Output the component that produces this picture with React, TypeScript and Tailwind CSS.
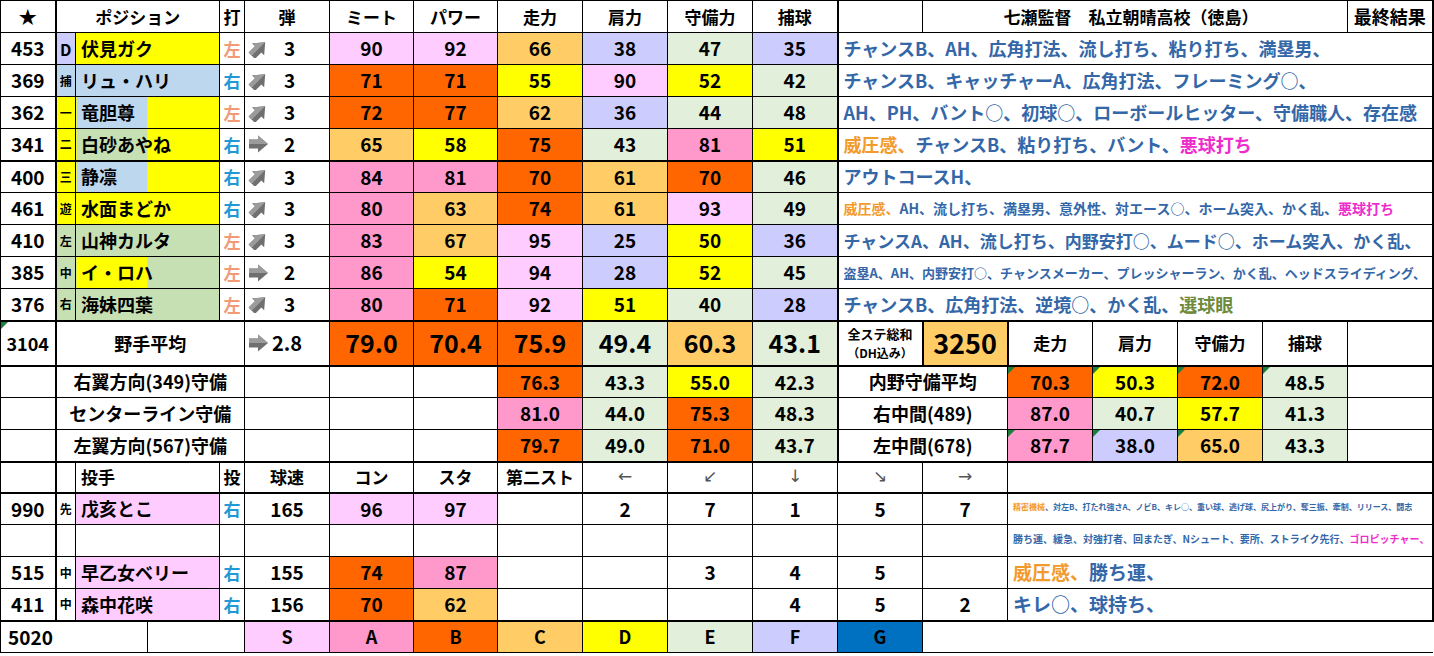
import React from 'react';

type Seg = [string, string];

const BLUE = 'text-[#3467a8]';
const ORANGE = 'text-[#f39a2c]';
const PINK = 'text-[#ee2ccc]';
const OLIVE = 'text-[#6f8a3c]';

const gradeBg: Record<string, string> = {
  S: 'bg-[#ffccff]',
  A: 'bg-[#ff99cc]',
  B: 'bg-[#ff6600]',
  C: 'bg-[#ffcc66]',
  D: 'bg-[#ffff00]',
  E: 'bg-[#e2efda]',
  F: 'bg-[#ccccff]',
  G: 'bg-[#0070c0]',
};

const rank = (v: number) =>
  v >= 90 ? 'S' : v >= 80 ? 'A' : v >= 70 ? 'B' : v >= 60 ? 'C' : v >= 50 ? 'D' : v >= 40 ? 'E' : v >= 20 ? 'F' : 'G';

const fill = {
  Y: 'bg-[#ffff00]',
  BL: 'bg-[#bdd7ee]',
  GR: 'bg-[#c6e0b4]',
  LV: 'bg-[#ccccff]',
  BY: 'bg-[linear-gradient(to_right,#bdd7ee_50%,#ffff00_50%)]',
  GY: 'bg-[linear-gradient(to_right,#c6e0b4_50%,#ffff00_50%)]',
  YG: 'bg-[linear-gradient(to_right,#ffff00_50%,#c6e0b4_50%)]',
  P: 'bg-[#ffccff]',
};

const LEFT = 'text-[#f29a78]';
const RIGHT = 'text-[#1f9ad6]';

const batters = [
  { no: 453, pos: 'D', posBg: fill.LV, name: '伏見ガク', nameBg: fill.Y, hand: '左', dan: 3, stats: [90, 92, 66, 38, 47, 35], size: 'text-[18px]',
    abil: [['チャンスB、AH、広角打法、流し打ち、粘り打ち、満塁男、', BLUE]] as Seg[] },
  { no: 369, pos: '捕', posBg: fill.BL, name: 'リュ・ハリ', nameBg: fill.BL, hand: '右', dan: 3, stats: [71, 71, 55, 90, 52, 42], size: 'text-[18px]',
    abil: [['チャンスB、キャッチャーA、広角打法、フレーミング○、', BLUE]] as Seg[] },
  { no: 362, pos: '一', posBg: fill.Y, name: '竜胆尊', nameBg: fill.BY, hand: '左', dan: 3, stats: [72, 77, 62, 36, 44, 48], size: 'text-[18px]',
    abil: [['AH、PH、バント○、初球○、ローボールヒッター、守備職人、存在感', BLUE]] as Seg[] },
  { no: 341, pos: '二', posBg: fill.Y, name: '白砂あやね', nameBg: fill.GY, hand: '右', dan: 2, stats: [65, 58, 75, 43, 81, 51], size: 'text-[18px]',
    abil: [['威圧感、', ORANGE], ['チャンスB、粘り打ち、バント、', BLUE], ['悪球打ち', PINK]] as Seg[] },
  { no: 400, pos: '三', posBg: fill.Y, name: '静凛', nameBg: fill.BY, hand: '右', dan: 3, stats: [84, 81, 70, 61, 70, 46], size: 'text-[18px]',
    abil: [['アウトコースH、', BLUE]] as Seg[] },
  { no: 461, pos: '遊', posBg: fill.Y, name: '水面まどか', nameBg: fill.Y, hand: '右', dan: 3, stats: [80, 63, 74, 61, 93, 49], size: 'text-[14px]',
    abil: [['威圧感、', ORANGE], ['AH、流し打ち、満塁男、意外性、対エース○、ホーム突入、かく乱、', BLUE], ['悪球打ち', PINK]] as Seg[] },
  { no: 410, pos: '左', posBg: fill.GR, name: '山神カルタ', nameBg: fill.GR, hand: '左', dan: 3, stats: [83, 67, 95, 25, 50, 36], size: 'text-[17px]',
    abil: [['チャンスA、AH、流し打ち、内野安打○、ムード○、ホーム突入、かく乱、', BLUE]] as Seg[] },
  { no: 385, pos: '中', posBg: fill.GR, name: 'イ・ロハ', nameBg: fill.YG, hand: '左', dan: 2, stats: [86, 54, 94, 28, 52, 45], size: 'text-[13px]',
    abil: [['盗塁A、AH、内野安打○、チャンスメーカー、プレッシャーラン、かく乱、ヘッドスライディング、', BLUE]] as Seg[] },
  { no: 376, pos: '右', posBg: fill.GR, name: '海妹四葉', nameBg: fill.GR, hand: '左', dan: 3, stats: [80, 71, 92, 51, 40, 28], size: 'text-[18px]',
    abil: [['チャンスB、広角打法、逆境○、かく乱、', BLUE], ['選球眼', OLIVE]] as Seg[] },
];

const averages = [79.0, 70.4, 75.9, 49.4, 60.3, 43.1];

const defense = [
  { label: '右翼方向(349)守備', vals: [76.3, 43.3, 55.0, 42.3], right: '内野守備平均', rvals: [70.3, 50.3, 72.0, 48.5], tri: true },
  { label: 'センターライン守備', vals: [81.0, 44.0, 75.3, 48.3], right: '右中間(489)', rvals: [87.0, 40.7, 57.7, 41.3], tri: false },
  { label: '左翼方向(567)守備', vals: [79.7, 49.0, 71.0, 43.7], right: '左中間(678)', rvals: [87.7, 38.0, 65.0, 43.3], tri: true },
];

const pitchers = [
  { no: '990', pos: '先', name: '戊亥とこ', hand: '右', speed: 165, con: 96, sta: 97, dirs: ['2', '7', '1', '5', '7'], size: 'text-[8px]',
    abil: [['精密機械', ORANGE], ['、対左B、打たれ強さA、ノビB、キレ○、重い球、逃げ球、尻上がり、奪三振、牽制、リリース、闘志', BLUE]] as Seg[] },
  { no: '', pos: '', name: '', hand: '', speed: 0, con: 0, sta: 0, dirs: ['', '', '', '', ''], size: 'text-[10px]',
    abil: [['勝ち運、緩急、対強打者、回またぎ、Nシュート、要所、ストライク先行、', BLUE], ['ゴロピッチャー、', PINK]] as Seg[] },
  { no: '515', pos: '中', name: '早乙女ベリー', hand: '右', speed: 155, con: 74, sta: 87, dirs: ['', '3', '4', '5', ''], size: 'text-[19px]',
    abil: [['威圧感、', ORANGE], ['勝ち運、', BLUE]] as Seg[] },
  { no: '411', pos: '中', name: '森中花咲', hand: '右', speed: 156, con: 70, sta: 62, dirs: ['', '', '4', '5', '2'], size: 'text-[19px]',
    abil: [['キレ○、球持ち、', BLUE]] as Seg[] },
];

const widths = [
  'w-[55px]', 'w-[20px]', 'w-[72px]', 'w-[72px]', 'w-[25px]', 'w-[85px]', 'w-[84px]', 'w-[84px]', 'w-[85px]', 'w-[85px]',
  'w-[85px]', 'w-[85px]', 'w-[85px]', 'w-[85px]', 'w-[85px]', 'w-[85px]', 'w-[85px]', 'w-[85px]', 'w-[85px]',
];

type TdProps = { children?: React.ReactNode; className?: string; span?: number; bare?: boolean };

const Td = ({ children, className = '', span, bare }: TdProps) => (
  <td
    colSpan={span}
    className={`${bare ? '' : 'border border-black'} text-center align-middle whitespace-nowrap overflow-hidden ${className}`}
  >
    {children}
  </td>
);

const Tri = () => (
  <span className="absolute left-0 top-0 h-0 w-0 border-t-[7px] border-r-[7px] border-t-[#1d7f3c] border-r-transparent" />
);

// chunky grey block arrow, like the spreadsheet icon set
const Arrow = ({ diag }: { diag?: boolean }) => (
  <svg width="21" height="18" viewBox="0 0 21 18" className="shrink-0">
    <g transform={diag ? 'rotate(-45 10.5 9)' : undefined}>
      <polygon points="1,4.5 10,4.5 10,0.5 20,9 10,17.5 10,13.5 1,13.5" fill="#6f6f6f" />
      <polygon points="1,4.5 10,4.5 10,0.5 20,9 1,9" fill="#9b9b9b" />
    </g>
  </svg>
);

const Segs = ({ segs }: { segs: Seg[] }) => (
  <>
    {segs.map(([t, c], i) => (
      <span key={i} className={c}>
        {t}
      </span>
    ))}
  </>
);

const DIR = "font-normal text-[17px] text-[#555] font-[family-name:'DejaVu_Sans',sans-serif]";

const App = () => {
  return (
    <div className="w-[1434px] h-[656px] overflow-hidden bg-white text-black font-[family-name:'Noto_Sans_CJK_JP','Noto_Sans',sans-serif]">
      <table className="table-fixed w-[1432px] border-collapse">
        <colgroup>
          {widths.map((w, i) => (
            <col key={i} className={w} />
          ))}
        </colgroup>
        <tbody>
          {/* header */}
          <tr className="h-[32px] text-[17px] font-bold">
            <Td className="border-r-2 text-[18px]">★</Td>
            <Td span={3}>ポジション</Td>
            <Td>打</Td>
            <Td>弾</Td>
            <Td>ミート</Td>
            <Td>パワー</Td>
            <Td>走力</Td>
            <Td>肩力</Td>
            <Td>守備力</Td>
            <Td>捕球</Td>
            <Td className="border-l-2"></Td>
            <Td span={5} className="pr-[8px]">七瀬監督　私立朝晴高校（徳島）</Td>
            <Td className="border-r-2 text-[18px]">最終結果</Td>
          </tr>

          {/* batters */}
          {batters.map((b, i) => (
            <tr key={b.no} className={`h-[32px] font-bold ${i === 3 || i === 8 ? 'border-b-2 border-black' : ''}`}>
              <Td className="border-r-2 text-[19px]">{b.no}</Td>
              <Td className={`${b.posBg} ${b.pos === 'D' ? 'text-[16px]' : 'text-[12px]'}`}>{b.pos}</Td>
              <Td span={2} className={`${b.nameBg} text-left pl-[5px] text-[18px]`}>
                {b.name}
              </Td>
              <Td className={`text-[17px] ${b.hand === '左' ? LEFT : RIGHT}`}>{b.hand}</Td>
              <Td className="text-left text-[19px]">
                <div className="flex items-center pl-[3px]">
                  <Arrow diag={b.dan === 3} />
                  <span className="ml-[15px]">{b.dan}</span>
                </div>
              </Td>
              {b.stats.map((s, j) => (
                <Td key={j} className={`${gradeBg[rank(s)]} text-[19px]`}>
                  {s}
                </Td>
              ))}
              <Td span={7} className={`border-l-2 border-r-2 text-left pl-[5px] ${b.size}`}>
                <Segs segs={b.abil} />
              </Td>
            </tr>
          ))}

          {/* averages */}
          <tr className="h-[45px] font-bold border-b-2 border-black">
            <Td className="relative border-r-2 text-[18px]">
              <Tri />
              3104
            </Td>
            <Td span={4} className="text-[18px]">野手平均</Td>
            <Td className="text-left text-[20px]">
              <div className="flex items-center pl-[3px]">
                <Arrow />
                <span className="ml-[3px]">2.8</span>
              </div>
            </Td>
            {averages.map((a, j) => (
              <Td key={j} className={`${gradeBg[rank(a)]} text-[25px]`}>
                {a.toFixed(1)}
              </Td>
            ))}
            <Td className="border-l-2 leading-[19px]">
              <div className="text-[13px]">全ステ総和</div>
              <div className="text-[12px]">（DH込み）</div>
            </Td>
            <Td className={`${gradeBg.C} border-2 text-[27px]`}>3250</Td>
            <Td className="text-[17px]">走力</Td>
            <Td className="text-[17px]">肩力</Td>
            <Td className="text-[17px]">守備力</Td>
            <Td className="text-[17px]">捕球</Td>
            <Td className="border-r-2"></Td>
          </tr>

          {/* defense */}
          {defense.map((d, i) => (
            <tr key={d.label} className={`h-[32px] font-bold ${i === 2 ? 'border-b-2 border-black' : ''}`}>
              <Td className="border-r-2"></Td>
              <Td span={4} className="text-[18px]">{d.label}</Td>
              <Td></Td>
              <Td></Td>
              <Td></Td>
              {d.vals.map((v, j) => (
                <Td key={j} className={`${gradeBg[rank(v)]} text-[19px]`}>
                  {v.toFixed(1)}
                </Td>
              ))}
              <Td span={2} className="border-l-2 text-[18px]">{d.right}</Td>
              {d.rvals.map((v, j) => (
                <Td key={j} className={`relative ${gradeBg[rank(v)]} text-[19px]`}>
                  {d.tri && !(i === 2 && j === 3) && <Tri />}
                  {v.toFixed(1)}
                </Td>
              ))}
              <Td className="border-r-2"></Td>
            </tr>
          ))}

          {/* pitcher header */}
          <tr className="h-[31px] font-bold text-[17px] border-b-2 border-black">
            <Td className="border-r-2"></Td>
            <Td></Td>
            <Td span={2} className="text-left pl-[5px]">投手</Td>
            <Td>投</Td>
            <Td>球速</Td>
            <Td>コン</Td>
            <Td>スタ</Td>
            <Td className="text-[17px]">第二スト</Td>
            <Td className={DIR}>←</Td>
            <Td className={DIR}>↙</Td>
            <Td className={DIR}>↓</Td>
            <Td className={DIR}>↘</Td>
            <Td className={DIR}>→</Td>
            <Td span={5} className="border-r-2"></Td>
          </tr>

          {/* pitchers */}
          {pitchers.map((p, i) => (
            <tr key={i} className={`h-[32px] font-bold ${i === 3 ? 'border-b-2 border-black' : ''}`}>
              <Td className="border-r-2 text-[19px]">{p.no}</Td>
              <Td className="text-[12px]">{p.pos}</Td>
              <Td span={2} className={`${p.name ? fill.P : ''} text-left pl-[5px] text-[18px]`}>
                {p.name}
              </Td>
              <Td className={`text-[17px] ${RIGHT}`}>{p.hand}</Td>
              <Td className="text-[19px]">{p.speed || ''}</Td>
              <Td className={`${p.con ? gradeBg[rank(p.con)] : ''} text-[19px]`}>{p.con || ''}</Td>
              <Td className={`${p.sta ? gradeBg[rank(p.sta)] : ''} text-[19px]`}>{p.sta || ''}</Td>
              <Td></Td>
              {p.dirs.map((d, j) => (
                <Td key={j} className="text-[19px]">
                  {d}
                </Td>
              ))}
              <Td span={5} className={`border-r-2 text-left pl-[5px] ${p.size} ${i < 2 ? 'align-bottom pb-[4px]' : ''}`}>
                <Segs segs={p.abil} />
              </Td>
            </tr>
          ))}

          {/* grade legend */}
          <tr className="h-[32px] font-bold text-[18px]">
            <Td span={3} className="text-left pl-[7px] text-[19px]">5020</Td>
            <Td span={2}></Td>
            {['S', 'A', 'B', 'C', 'D', 'E', 'F', 'G'].map((g) => (
              <Td key={g} className={gradeBg[g]}>
                {g}
              </Td>
            ))}
            <Td span={6} bare className="border-b border-black"></Td>
          </tr>
        </tbody>
      </table>
    </div>
  );
};

export default App;
